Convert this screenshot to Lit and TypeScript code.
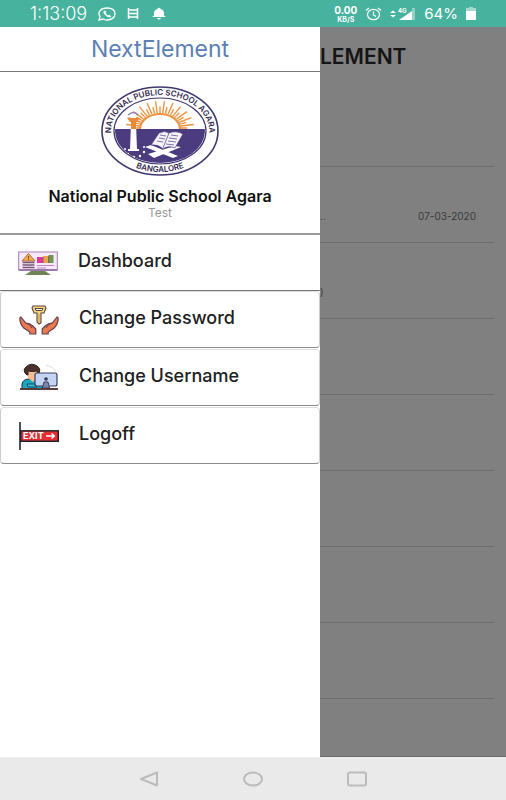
import { LitElement, html, css, svg } from "lit";
import { customElement } from "lit/decorators.js";

const rays = Array.from({ length: 25 }, (_, i) => {
  const a = Math.PI + (i * Math.PI) / 24;
  const tip = i % 2 ? 1 : 0.8;
  return {
    x1: 60 + 21 * Math.cos(a),
    y1: 43 + 15 * Math.sin(a),
    x2: 60 + 34 * tip * Math.cos(a),
    y2: 43 + 27 * tip * Math.sin(a),
  };
});

const crest = html`<svg class="crest" viewBox="0 0 120 92" role="img" aria-label="School crest">
  <defs>
    <path id="arcTop" d="M11 46A49 36 0 0 1 109 46" />
    <path id="arcBottom" d="M6 46A54 41 0 0 0 114 46" />
    <clipPath id="disc"><ellipse cx="60" cy="46" rx="45" ry="32" /></clipPath>
  </defs>
  <ellipse cx="60" cy="46" rx="58" ry="44" fill="#fff" stroke="#41366f" stroke-width="1.600" />
  <ellipse cx="60" cy="46" rx="46" ry="33" fill="#fff" stroke="#41366f" stroke-width="1.200" />
  <g clip-path="url(#disc)">
    ${rays.map((r) => svg`<line x1=${r.x1} y1=${r.y1} x2=${r.x2} y2=${r.y2} stroke="#ee9440" stroke-width="1.400" />`)}
    <path d="M40 44A20 15 0 0 1 80 44" fill="#fff" stroke="#ee9440" stroke-width="2.200" />
    <rect x="10" y="44" width="100" height="40" fill="#4b3c80" />
    <path d="M31 38h5l1 27h-7z" fill="#fff" />
    <path d="M27 33h13l-3 4h-7zM31 37h5v7h-5z" fill="#e88a3d" />
    <path d="M28 30q6-5 10 0" fill="none" stroke="#8c84aa" stroke-width="1.600" />
    <path d="M28 65h11" stroke="#fff" stroke-width="2" />
    <g fill="#fff">
      <circle cx="25" cy="64" r="1" /><circle cx="28" cy="69" r="1.200" /><circle cx="34" cy="72" r="1.200" />
      <circle cx="40" cy="71" r="1.200" /><circle cx="44" cy="67" r="1.200" /><circle cx="44" cy="62" r="1" />
    </g>
    <path d="M48 69l27-8 6 1-27 11zM51 60l27 11-5 2-28-11z" fill="#fff" />
    <path d="M51 60l8-12q6-3 10 0 7-3 14 1l-8 14q-7-3-12 1-5-5-12-4z" fill="#f5f3f8" stroke="#4b3c80" stroke-width="0.700" />
    <path d="M69 48l-6 15M60 50l6 1M59 53l6 1M57 56l6 1M71 50l7 1M69 53l8 1M68 56l8 1M66 59l8 1" stroke="#4b3c80" stroke-width="0.700" />
  </g>
  <g class="crest-text">
    <text text-anchor="middle"><textPath href="#arcTop" startOffset="50%">NATIONAL PUBLIC SCHOOL AGARA</textPath></text>
    <text text-anchor="middle"><textPath href="#arcBottom" startOffset="50%">BANGALORE</textPath></text>
  </g>
</svg>`;

const dashboardIcon = html`<svg class="icon" viewBox="0 0 40 32" aria-hidden="true">
  <path d="M13 24h14l6 4H7z" fill="#708356" />
  <rect x="0.600" y="5" width="38.800" height="18" fill="#f5e9fa" stroke="#b594c2" stroke-width="1.200" />
  <path d="M1 23h38" stroke="#8e659e" stroke-width="1.400" />
  <path d="M10.500 6.500L17 14H4z" fill="#f2ae4c" stroke="#b36b3c" />
  <path d="M10.500 9v2.500M10.500 12.200v1" stroke="#68402b" />
  <path d="M4.500 15.500h12M4.500 18h12M4.500 20.500h12" stroke="#775875" stroke-width="1.600" />
  <path d="M19 10h6v6h-6z" fill="#e23898" /><path d="M25 9h5v7h-5z" fill="#eda34d" /><path d="M30.500 8h5v8h-5z" fill="#6c984b" />
  <path d="M25 10v6M30.500 9v7" stroke="#8b5b76" /><path d="M19 18.500h17M19 21h9" stroke="#bf88c2" />
</svg>`;

const passwordIcon = html`<svg class="icon" viewBox="0 0 40 32" aria-hidden="true">
  <path d="M14 2h12l1 2-2 5h-3v10l-2 1-2-2V9h-3l-2-5z" fill="#f5d877" stroke="#59424f" stroke-width="1.100" />
  <path d="M16 4.500h8l-1 2h-6z" fill="#fff" stroke="#59424f" /><path d="M20 10v8" stroke="#c79b45" />
  <path d="M0.800 14q1-2 2 0l4 5q4 0 7 3l3 3v5h-6v-2l-6-4Q0.800 20 0.800 14z" fill="#e97950" stroke="#614050" stroke-width="1.200" />
  <path d="M39.200 14q-1-2-2 0l-4 5q-4 0-7 3l-3 3v5h6v-2l6-4q4-4 4-10z" fill="#e97950" stroke="#614050" stroke-width="1.200" />
  <path d="M7 19q4 1 6 5M33 19q-4 1-6 5" fill="none" stroke="#614050" />
</svg>`;

const usernameIcon = html`<svg class="icon" viewBox="0 0 40 32" aria-hidden="true">
  <path d="M2 10Q6 4 12 3M27 3q8 2 10 7" fill="none" stroke="#ddd" />
  <path d="M3 27v-5q1-5 7-5h6l4 5h4l-1 5z" fill="#1ba7c2" stroke="#17323d" />
  <path d="M9 10h9v6l-4 4-5-4z" fill="#f5bd91" />
  <path d="M8 13Q3 9 7 5q5-5 11-1 5 3 1 9l-1-4q-5 1-9 0v4z" fill="#4a302b" stroke="#2b2021" />
  <path d="M8 22h7l3 3h-9z" fill="#36c1da" stroke="#17323d" stroke-width="0.800" />
  <rect x="16" y="11" width="22" height="13" rx="2" fill="#c6d4f4" stroke="#38405f" stroke-width="1.200" />
  <circle cx="27" cy="17" r="1.800" fill="#303955" /><path d="M25 20h4l1.500 6h-7z" fill="#7988b0" stroke="#38405f" />
  <path d="M1 27h38" stroke="#593d3c" stroke-width="2" />
</svg>`;

const exitIcon = html`<svg class="icon" viewBox="0 0 40 32" aria-hidden="true">
  <rect x="0" y="2" width="2" height="28" fill="#495057" />
  <rect x="1.800" y="10.800" width="37.500" height="10.500" fill="#e32d32" stroke="#182329" stroke-width="1.400" />
  <text class="exit-text" x="4" y="19">EXIT</text>
  <path d="M27 16h8M32.500 13.500L35.500 16l-3 2.500" fill="none" stroke="#fff" stroke-width="1.300" />
</svg>`;

const items = [
  { label: "Change Password", icon: passwordIcon },
  { label: "Change Username", icon: usernameIcon },
  { label: "Logoff", icon: exitIcon },
];

@customElement("app-root")
export class AppRoot extends LitElement {
  static styles = css`
    :host { display: flex; flex-direction: column; min-height: 100vh; font-family: Inter, Roboto, sans-serif; background: #fff; color: #202020; }
    * { box-sizing: border-box; }
    svg { display: block; flex: none; }
    button { font: inherit; color: inherit; background: none; border: 0; padding: 0; margin: 0; }
    .status { display: flex; align-items: center; justify-content: space-between; height: 27px; padding: 0 30px; background: #47b29d; color: #fff; font-size: 15px; line-height: 20px; }
    .group { display: flex; align-items: center; gap: 11px; }
    .group.end { gap: 8px; }
    .clock { font-size: 18px; font-weight: 300; }
    .rate { display: flex; flex-direction: column; align-items: center; font-size: 10px; line-height: 12px; font-weight: 700; }
    .unit { font-size: 7px; line-height: 8px; }
    .signal-text { font: 700 6px Inter, sans-serif; fill: #fff; }
    .stage { flex: 1; display: grid; grid-template-columns: minmax(0, 320fr) minmax(0, 186fr); }
    .drawer { background: #fff; }
    .brand { margin: 0; height: 45px; border-bottom: 1px solid #777; text-align: center; font-size: 23px; font-weight: 400; line-height: 44px; color: #5b80b4; }
    .profile { height: 163px; padding-top: 13px; border-bottom: 2px solid #999; display: flex; flex-direction: column; align-items: center; }
    .crest { width: 120px; height: 92px; }
    .crest-text { font: 600 8px Inter, sans-serif; fill: #33294f; }
    .school { margin: 9px 0 0; font-size: 16px; line-height: 20px; font-weight: 600; color: #111; }
    .role { margin: 0; font-size: 12px; line-height: 13px; color: #999; }
    .item { display: flex; align-items: center; gap: 20px; width: 100%; height: 57px; padding: 0 18px; border: 1px solid #8c8c8c; border-left-color: #ccc; border-right-color: #ccc; border-radius: 4px; font-size: 18px; line-height: 24px; font-weight: 500; text-align: left; }
    .item + .item { margin-top: 1px; border-top-color: #ddd; }
    .item.plain { height: 56px; border-width: 0 0 1px; border-color: #777; border-radius: 0; }
    .item.plain + .item { margin-top: 0; }
    .label { padding-bottom: 4px; }
    .icon { width: 40px; height: 32px; }
    .exit-text { font: 700 9px Inter, sans-serif; fill: #fff; }
    .page { background: #808080; border-bottom: 1px solid #6b6b6b; overflow: hidden; }
    .heading { margin: 0; height: 59px; font-size: 21px; line-height: 59px; font-weight: 600; color: #151515; }
    .row { display: flex; align-items: flex-end; justify-content: space-between; height: 76px; margin-right: 12px; padding: 0 18px 17px 0; border-bottom: 1px solid #6e6e6e; font-size: 10px; line-height: 18px; color: #3a3a3a; }
    .first { height: 81px; }
    .nav { display: flex; align-items: center; justify-content: center; gap: 84px; height: 43px; background: #eaeaea; }
  `;

  render() {
    return html`
      <header class="status">
        <div class="group">
          <span class="clock">1:13:09</span>
          <svg width="18" height="14" viewBox="0 0 18 14" fill="none" stroke="#fff" stroke-width="1.300"><path d="M1 13l1-3.500C-1 5 3 1 9 1s8 3 8 6-3 6-8 6q-2 0-4-1z" /><path d="M6 4q-1 2 2 4.500T13 9.500L11 8l-1 1Q8 8 7.500 6.500L8 5.500 7 4z" fill="#fff" stroke-width="0.800" /></svg>
          <svg width="12" height="13" viewBox="0 0 12 13" stroke="#fff" stroke-width="1.500"><path d="M1.500 1v11M10.500 1v11M1 3h10M1 6.500h10M1 10h10" /></svg>
          <svg width="18" height="13" viewBox="0 0 18 13" fill="#fff"><path d="M7.500 2a1.500 1.200 0 0 1 3 0Q14 3 14 6v2.500l2 1.500H2l2-1.500V6q0-3 3.500-4zM7 11h4q-.500 1.500-2 1.500T7 11z" /></svg>
        </div>
        <div class="group end">
          <span class="rate"><span>0.00</span><span class="unit">KB/S</span></span>
          <svg width="17" height="14" viewBox="0 0 17 14" fill="none" stroke="#fff" stroke-width="1.200"><ellipse cx="8.500" cy="7.500" rx="6" ry="5.200" /><path d="M1 3.500L4 1M16 3.500L13 1M8.500 4.500V8l2.500 1.500" /></svg>
          <svg width="26" height="14" viewBox="0 0 26 14" fill="#fff"><path d="M0 6l3-2.500L6 6zM0 8h6l-3 2.500z" /><path d="M22 4.500V1h3v12h-3z" opacity="0.400" /><path d="M9 13L22 4v9z" /><text class="signal-text" x="8" y="6">4G</text></svg>
          <span>64%</span>
          <svg width="10" height="13" viewBox="0 0 10 13" fill="#fff"><path d="M3 0h4v1h3v3H0V1h3z" opacity="0.500" /><path d="M0 4h10v9H0z" /></svg>
        </div>
      </header>
      <div class="stage">
        <aside class="drawer">
          <h1 class="brand">NextElement</h1>
          <section class="profile">
            ${crest}
            <h2 class="school">National Public School Agara</h2>
            <p class="role">Test</p>
          </section>
          <nav aria-label="Menu">
            <button class="item plain">${dashboardIcon}<span class="label">Dashboard</span></button>
            ${items.map((i) => html`<button class="item">${i.icon}<span class="label">${i.label}</span></button>`)}
          </nav>
        </aside>
        <main class="page">
          <h2 class="heading">LEMENT</h2>
          <div class="row first"></div>
          <div class="row"><span>..</span><time datetime="2020-03-07">07-03-2020</time></div>
          <div class="row"><span>)</span></div>
          ${[1, 2, 3, 4, 5].map(() => html`<div class="row"></div>`)}
        </main>
      </div>
      <footer class="nav">
        <button aria-label="Back"><svg width="20" height="16" viewBox="0 0 20 16" fill="none" stroke="#bcbcbc" stroke-width="2" stroke-linejoin="round"><path d="M18 1.500v13L2 8z" /></svg></button>
        <button aria-label="Home"><svg width="20" height="16" viewBox="0 0 20 16" fill="none" stroke="#bcbcbc" stroke-width="2"><ellipse cx="10" cy="8" rx="9" ry="6.500" /></svg></button>
        <button aria-label="Recent apps"><svg width="20" height="16" viewBox="0 0 20 16" fill="none" stroke="#bcbcbc" stroke-width="2"><rect x="1" y="1.500" width="18" height="13" rx="2" /></svg></button>
      </footer>
    `;
  }
}
